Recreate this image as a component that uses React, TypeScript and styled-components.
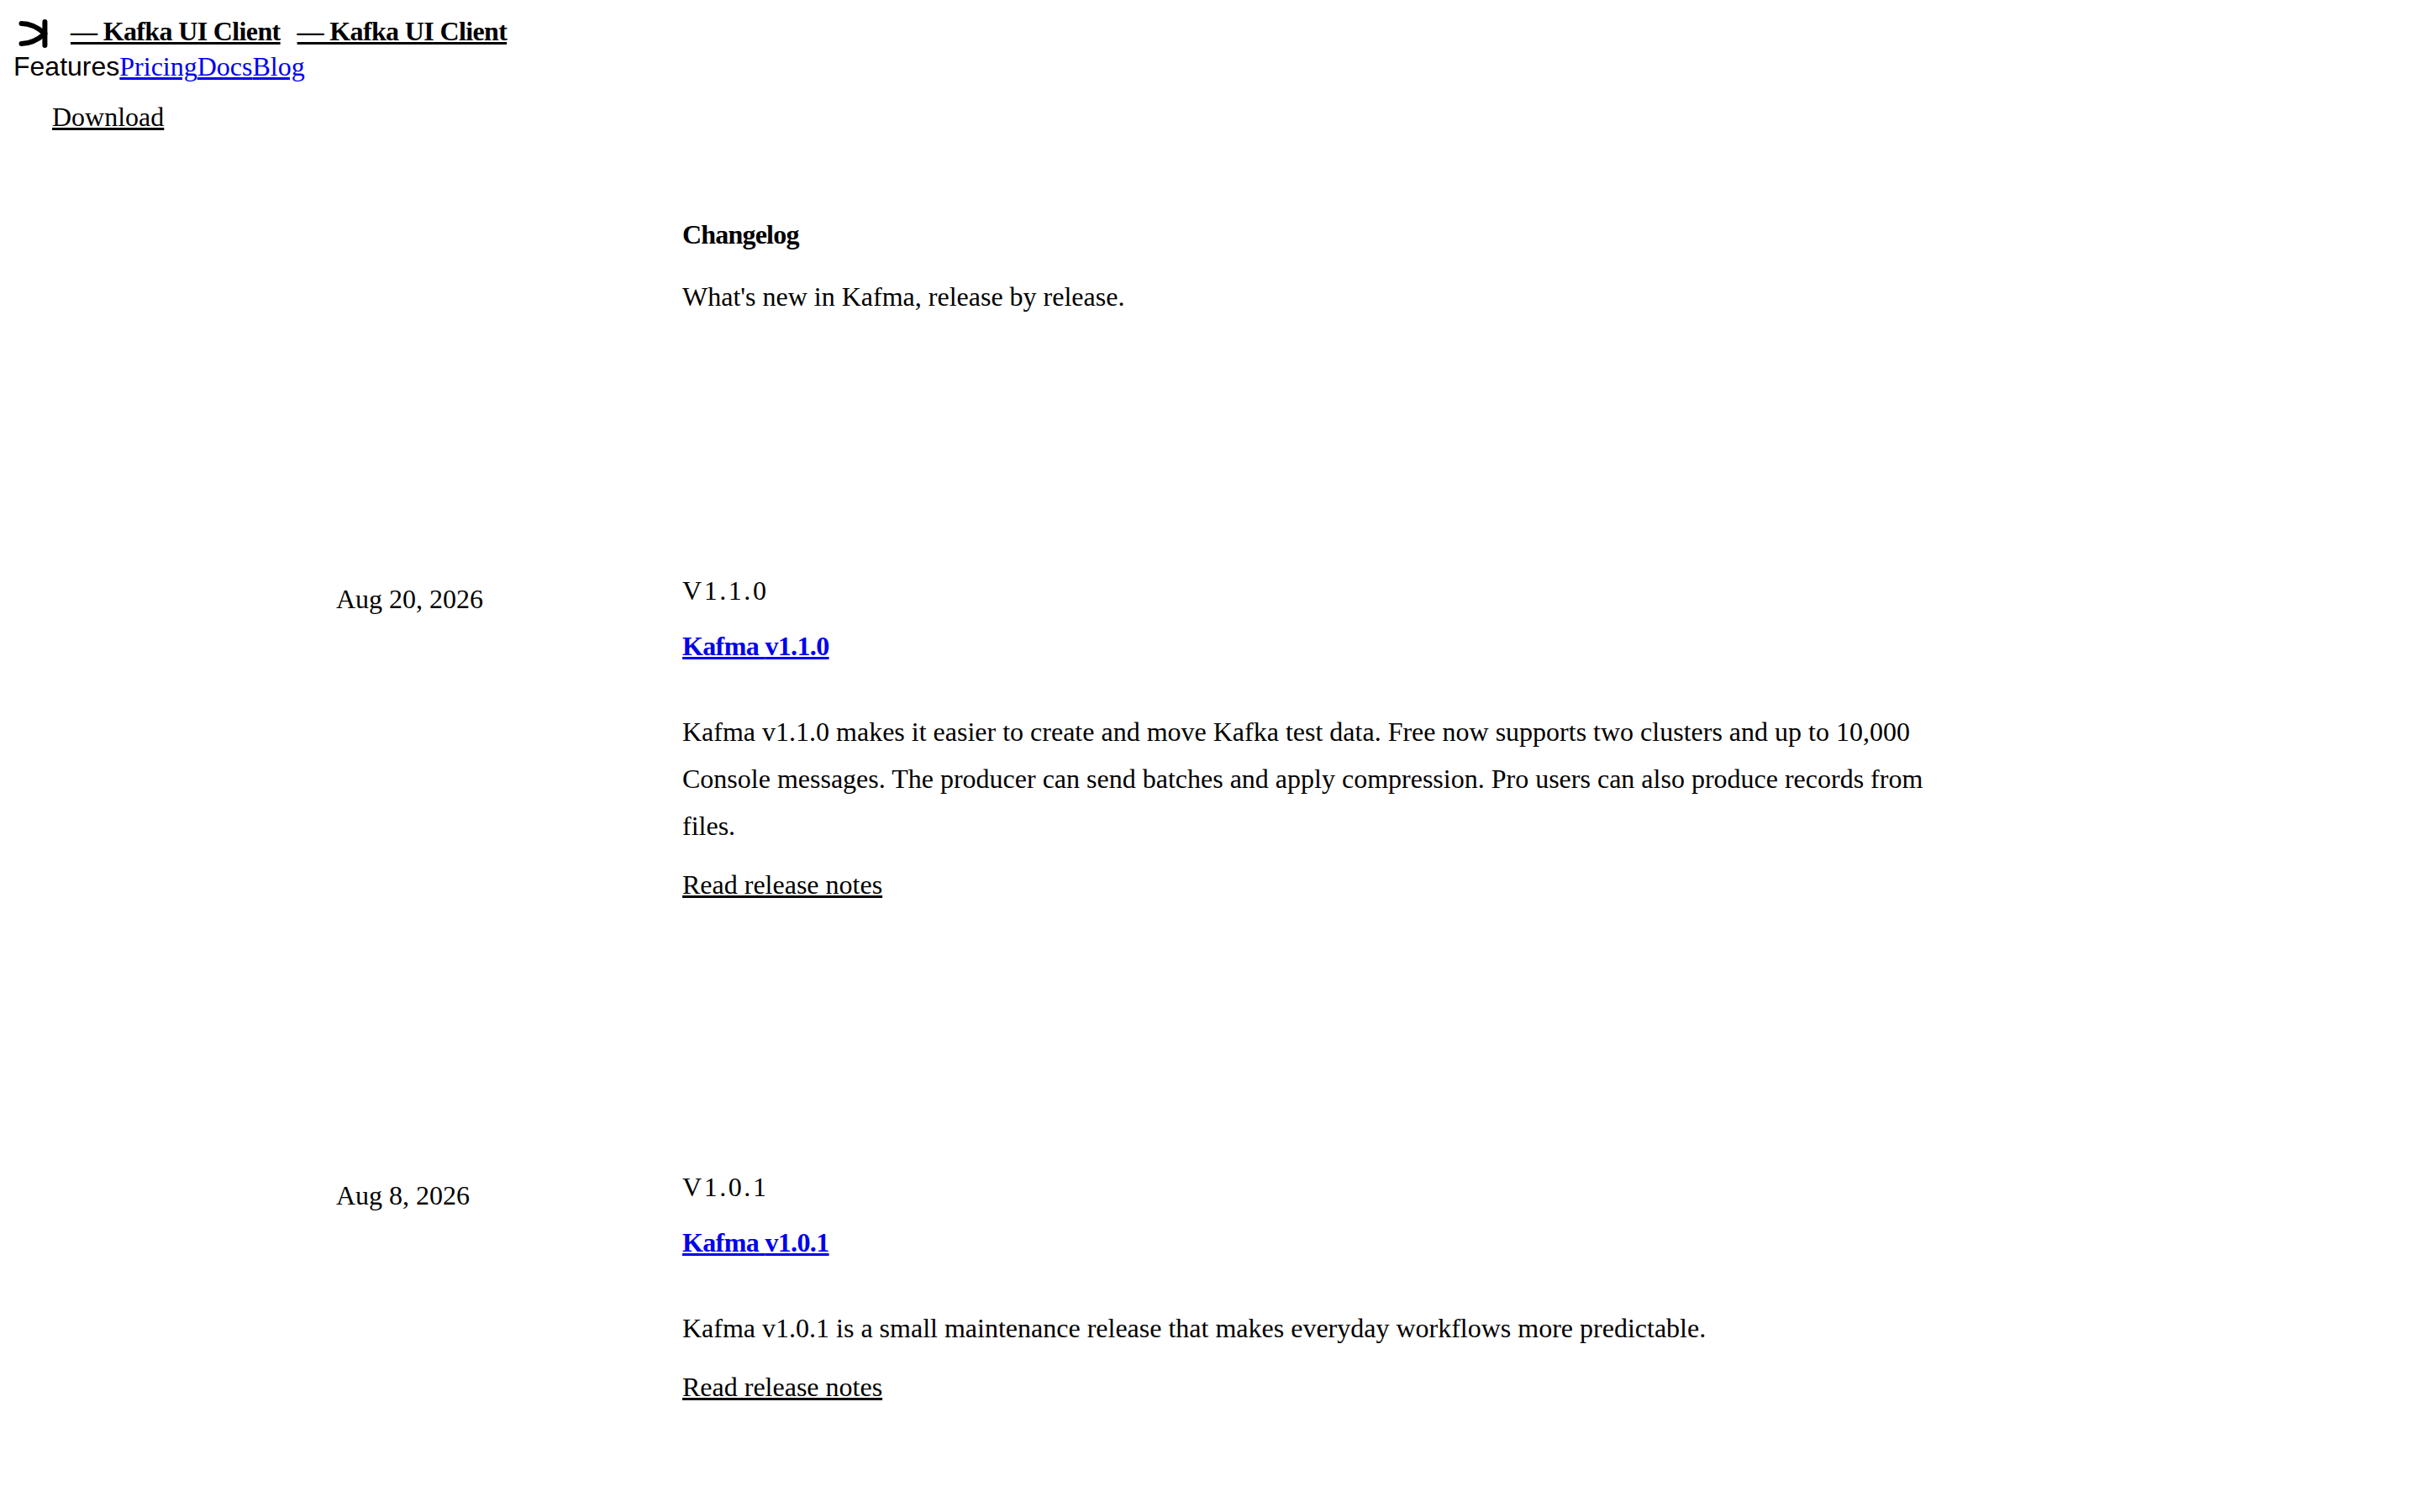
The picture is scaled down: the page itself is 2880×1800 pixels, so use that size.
import React from "react";
import styled, { createGlobalStyle } from "styled-components";

const GlobalStyle = createGlobalStyle`
  body {
    margin: 16px;
    background: #ffffff;
    color: #000000;
    font-family: "Liberation Serif", "Times New Roman", serif;
    font-size: 32px;
    line-height: 36px;
  }
`;

const Header = styled.header`
  display: flex;
  flex-direction: column;
  align-items: flex-start;
`;

const Brand = styled.a`
  display: flex;
  align-items: flex-start;
  gap: 20px;
  color: inherit;
  font-weight: 700;
  letter-spacing: -0.02em;
  text-decoration: none;
`;

const BrandMark = styled.svg`
  display: block;
  width: 48px;
  height: 45px;
  fill: none;
  stroke: currentColor;
  stroke-width: 6;
  stroke-linecap: round;
  stroke-linejoin: round;
`;

const BrandName = styled.span`
  padding-top: 3px;
  text-decoration: underline;
`;

const Nav = styled.nav`
  display: flex;
`;

const NavButton = styled.button`
  padding: 0;
  border: 0;
  background: none;
  color: inherit;
  font: 32px/36px "Liberation Sans", Arial, sans-serif;
`;

const TextLink = styled.a<{ $plain?: boolean }>`
  color: ${({ $plain }) => ($plain ? "inherit" : "#0000ee")};
  text-decoration: underline;
`;

const DownloadLink = styled.a`
  padding: 24px 46px;
  color: inherit;
`;

const Main = styled.main`
  max-width: 2080px;
  margin: 0 auto;
  padding: 80px 0 160px;
`;

const Columns = styled.div`
  display: grid;
  grid-template-columns: 412px minmax(0, 1fr);
`;

const Intro = styled.div`
  grid-column: 2;
  display: flex;
  flex-direction: column;
  gap: 38px;
  margin-bottom: 314px;
`;

const Title = styled.h1`
  margin: 0;
  font-size: 32px;
  letter-spacing: -0.025em;
`;

const Paragraph = styled.p`
  margin: 0;
`;

const Releases = styled.div`
  display: flex;
  flex-direction: column;
  gap: 324px;
`;

const ReleaseDate = styled.time`
  padding-top: 10px;
`;

const ReleaseBody = styled.div`
  display: flex;
  flex-direction: column;
  align-items: flex-start;
  max-width: 1536px;
`;

const Version = styled.span`
  letter-spacing: 0.08em;
  text-transform: uppercase;
`;

const ReleaseTitle = styled.h2`
  margin: 30px 0 56px;
  font-size: 32px;
  letter-spacing: -0.02em;
`;

const Summary = styled.p`
  margin: 0 0 24px;
  line-height: 56px;
`;

const releases = [
  {
    version: "v1.1.0",
    iso: "2026-08-20",
    date: "Aug 20, 2026",
    summary:
      "Kafma v1.1.0 makes it easier to create and move Kafka test data. Free now supports two clusters and up to 10,000 Console messages. The producer can send batches and apply compression. Pro users can also produce records from files.",
  },
  {
    version: "v1.0.1",
    iso: "2026-08-08",
    date: "Aug 8, 2026",
    summary:
      "Kafma v1.0.1 is a small maintenance release that makes everyday workflows more predictable.",
  },
];

export default function App() {
  return (
    <>
      <GlobalStyle />
      <Header>
        <Brand href="#home">
          <BrandMark viewBox="0 0 48 45" aria-hidden="true">
            <path d="M37.4 10V38" />
            <path d="M9.5 12C21 12 29 16.5 37.4 24C29 31.5 21 36 9.5 36" />
          </BrandMark>
          <BrandName>— Kafka UI Client</BrandName>
          <BrandName>— Kafka UI Client</BrandName>
        </Brand>
        <Nav>
          <NavButton type="button">Features</NavButton>
          <TextLink href="#pricing">Pricing</TextLink>
          <TextLink href="#docs">Docs</TextLink>
          <TextLink href="#blog">Blog</TextLink>
        </Nav>
        <DownloadLink href="#download">Download</DownloadLink>
      </Header>
      <Main>
        <Columns>
          <Intro>
            <Title>Changelog</Title>
            <Paragraph>What's new in Kafma, release by release.</Paragraph>
          </Intro>
        </Columns>
        <Releases>
          {releases.map((release) => (
            <Columns as="article" key={release.version}>
              <ReleaseDate dateTime={release.iso}>{release.date}</ReleaseDate>
              <ReleaseBody>
                <Version>{release.version}</Version>
                <ReleaseTitle>
                  <TextLink href={`#${release.version}`}>Kafma {release.version}</TextLink>
                </ReleaseTitle>
                <Summary>{release.summary}</Summary>
                <TextLink $plain href={`#${release.version}-notes`}>
                  Read release notes
                </TextLink>
              </ReleaseBody>
            </Columns>
          ))}
        </Releases>
      </Main>
    </>
  );
}
